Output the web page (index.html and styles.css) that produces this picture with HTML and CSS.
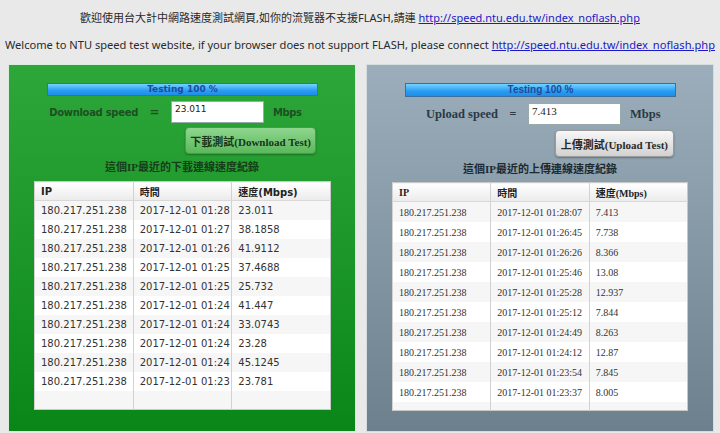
FILE: index.html
```html
<!DOCTYPE html>
<html lang="zh-Hant">
<head>
    <meta charset="UTF-8">
    <meta name="viewport" content="width=device-width, initial-scale=1.0">
    <title>NTU Speed Test</title>
    <link rel="stylesheet" href="styles.css">
</head>
<body>
    <div class="intro">
        <p class="intro-zh">歡迎使用台大計中網路速度測試網頁,如你的流覽器不支援FLASH,請連 <a href="#">http://speed.ntu.edu.tw/index_noflash.php</a></p>
        <p class="intro-en">Welcome to NTU speed test website, if your browser does not support FLASH, please connect <a href="#">http://speed.ntu.edu.tw/index_noflash.php</a></p>
    </div>

    <div class="panels">
        <!-- 下載 -->
        <div class="panel download">
            <div class="bar"><span>Testing 100 %</span></div>
            <div class="speed-row">
                <span class="speed-label">Download speed</span>
                <span class="eq">=</span>
                <input class="speed-value" type="text" value="23.011" readonly>
                <span class="unit">Mbps</span>
            </div>
            <div class="btn-row">
                <button class="test-btn">下載測試(Download Test)</button>
            </div>
            <div class="caption">這個IP最近的下載連線速度紀錄</div>
            <table class="records">
                <thead>
                    <tr><th>IP</th><th>時間</th><th>速度(Mbps)</th></tr>
                </thead>
                <tbody id="down-rows"></tbody>
            </table>
        </div>

        <!-- 上傳 -->
        <div class="panel upload">
            <div class="bar"><span>Testing 100 %</span></div>
            <div class="speed-row">
                <span class="speed-label">Upload speed</span>
                <span class="eq">=</span>
                <input class="speed-value" type="text" value="7.413" readonly>
                <span class="unit">Mbps</span>
            </div>
            <div class="btn-row">
                <button class="test-btn">上傳測試(Upload Test)</button>
            </div>
            <div class="caption">這個IP最近的上傳連線速度紀錄</div>
            <table class="records">
                <thead>
                    <tr><th>IP</th><th>時間</th><th>速度(Mbps)</th></tr>
                </thead>
                <tbody id="up-rows"></tbody>
            </table>
        </div>
    </div>

    <script>
        const ip = '180.217.251.238';
        const down = [
            ['2017-12-01 01:28', '23.011'],
            ['2017-12-01 01:27', '38.1858'],
            ['2017-12-01 01:26', '41.9112'],
            ['2017-12-01 01:25', '37.4688'],
            ['2017-12-01 01:25', '25.732'],
            ['2017-12-01 01:24', '41.447'],
            ['2017-12-01 01:24', '33.0743'],
            ['2017-12-01 01:24', '23.28'],
            ['2017-12-01 01:24', '45.1245'],
            ['2017-12-01 01:23', '23.781']
        ];
        const up = [
            ['2017-12-01 01:28:07', '7.413'],
            ['2017-12-01 01:26:45', '7.738'],
            ['2017-12-01 01:26:26', '8.366'],
            ['2017-12-01 01:25:46', '13.08'],
            ['2017-12-01 01:25:28', '12.937'],
            ['2017-12-01 01:25:12', '7.844'],
            ['2017-12-01 01:24:49', '8.263'],
            ['2017-12-01 01:24:12', '12.87'],
            ['2017-12-01 01:23:54', '7.845'],
            ['2017-12-01 01:23:37', '8.005']
        ];

        function fill(id, list) {
            const tbody = document.getElementById(id);
            list.forEach(item => {
                const tr = document.createElement('tr');
                [ip, item[0], item[1]].forEach(text => {
                    const td = document.createElement('td');
                    td.textContent = text;
                    tr.appendChild(td);
                });
                tbody.appendChild(tr);
            });
            // 空白列
            const tr = document.createElement('tr');
            tr.className = 'empty';
            for (let i = 0; i < 3; i++) tr.appendChild(document.createElement('td'));
            tbody.appendChild(tr);
        }

        fill('down-rows', down);
        fill('up-rows', up);
    </script>
</body>
</html>
```

FILE: styles.css
```css
html, body {
    margin: 0;
    padding: 0;
    overflow: hidden;
}
body {
    background-color: #e9e9e9;
    font-family: "Noto Sans", "Noto Sans CJK TC", sans-serif;
    color: #2a2a2a;
}
.intro p {
    margin: 0;
    text-align: center;
    white-space: nowrap;
    font-size: 11px;
    line-height: 18px;
}
.intro-zh {
    padding-top: 9px;
}
.intro-en {
    padding-top: 9px;
    font-size: 11.1px !important;
}
.intro a {
    color: #1a1ac8;
}

.panels {
    display: flex;
    gap: 10px;
    padding: 10px 0 0 8px;
}
.panel {
    width: 348px;
    height: 368px;
    border: 1px solid #dcecdc;
    padding-top: 18px;
    box-sizing: border-box;
}
.download {
    background: linear-gradient(#2ea73a, #0a8618);
    font-family: "DejaVu Sans", "Noto Sans CJK TC", sans-serif;
}
.upload {
    background: linear-gradient(#9caebb, #6c818d);
    border-color: #d6dde1;
    font-family: "Liberation Serif", "Noto Sans CJK TC", serif;
}

/* 進度條 */
.bar {
    width: 271px;
    height: 13px;
    margin-left: 38px;
    background: linear-gradient(#74d2ff, #2a9cf2 60%, #1c8ee8);
    border: 1px solid #3a6fa0;
    box-sizing: border-box;
    text-align: center;
    font-family: "DejaVu Sans", sans-serif;
    font-size: 9px;
    font-weight: bold;
    line-height: 11px;
    color: #1f4a9c;
}
.upload .bar {
    height: 14px;
    line-height: 12px;
    font-family: "Liberation Sans", sans-serif;
    font-size: 10px;
}

.speed-row {
    display: flex;
    align-items: center;
    margin-top: 5px;
    height: 22px;
}
.upload .speed-row {
    margin-top: 6px;
}
.speed-label {
    width: 129px;
    text-align: right;
    font-weight: bold;
    font-size: 10px;
    letter-spacing: -0.3px;
    color: #1d4f22;
}
.upload .speed-label {
    width: 131px;
    font-size: 12.5px;
    letter-spacing: 0;
    color: #2a3945;
}
.eq {
    width: 33px;
    text-align: center;
    font-weight: bold;
    font-size: 12px;
    color: #1d4f22;
}
.upload .eq {
    width: 30px;
    color: #2a3945;
}
.speed-value {
    width: 93px;
    height: 22px;
    margin: 0;
    padding: 0 3px 6px;
    border: 1px solid #9aa;
    box-sizing: border-box;
    font-family: "DejaVu Sans", sans-serif;
    font-size: 9px;
    color: #222;
    background: #fff;
    align-self: flex-start;
}
.upload .speed-value {
    font-family: "Liberation Serif", serif;
    font-size: 11px;
}
.unit {
    margin-left: 9px;
    font-weight: bold;
    font-size: 10px;
    letter-spacing: -0.4px;
    color: #1d4f22;
}
.upload .unit {
    font-size: 12.5px;
    letter-spacing: 0;
    color: #2a3945;
}

.btn-row {
    text-align: right;
    padding-right: 39px;
    margin-top: 4px;
}
.upload .btn-row {
    margin-top: 5px;
}
.test-btn {
    height: 27px;
    padding: 0 4px;
    border: 1px solid #4d9a4d;
    border-radius: 4px;
    background: linear-gradient(#8fd68f, #5cb85c);
    box-shadow: 0 1px 2px rgba(0, 0, 0, 0.3);
    font-family: "Liberation Serif", "Noto Sans CJK TC", serif;
    font-weight: bold;
    font-size: 11px;
    color: #17361a;
}
.upload .test-btn {
    padding: 0 5px;
    border-color: #9a9a9a;
    background: linear-gradient(#f7f7f7, #d2d2d2);
    color: #2a2a2a;
}

.caption {
    text-align: center;
    margin-top: 6px;
    font-family: "Liberation Serif", "Noto Sans CJK TC", serif;
    font-weight: bold;
    font-size: 11px;
    line-height: 14px;
    color: #173d1a;
}
.upload .caption {
    margin-top: 5px;
    color: #1f2a30;
}

/* 紀錄表格 */
.records {
    margin: 7px 0 0 25px;
    width: 297px;
    border-collapse: collapse;
    border: 1px solid #c8c8c8;
    background: #fff;
    table-layout: fixed;
    font-size: 10px;
    color: #333;
}
.upload .records {
    width: 296px;
    margin-top: 6px;
}
.records th {
    height: 18px;
    padding: 0 6px;
    text-align: left;
    font-weight: bold;
    background: linear-gradient(#ffffff, #ebebeb);
    border-left: 1px solid #d2d2d2;
    border-bottom: 1px solid #d8d8d8;
    color: #222;
}
.records td {
    height: 19px;
    padding: 0 6px;
    border-left: 1px solid #d2d2d2;
    white-space: nowrap;
    overflow: hidden;
}
.upload .records td {
    height: 20px;
}
.records tbody tr:nth-child(odd) {
    background: #f6f6f6;
}
.records tr.empty td {
    height: 18px;
}
.upload .records tr.empty td {
    height: 8px;
}
```
